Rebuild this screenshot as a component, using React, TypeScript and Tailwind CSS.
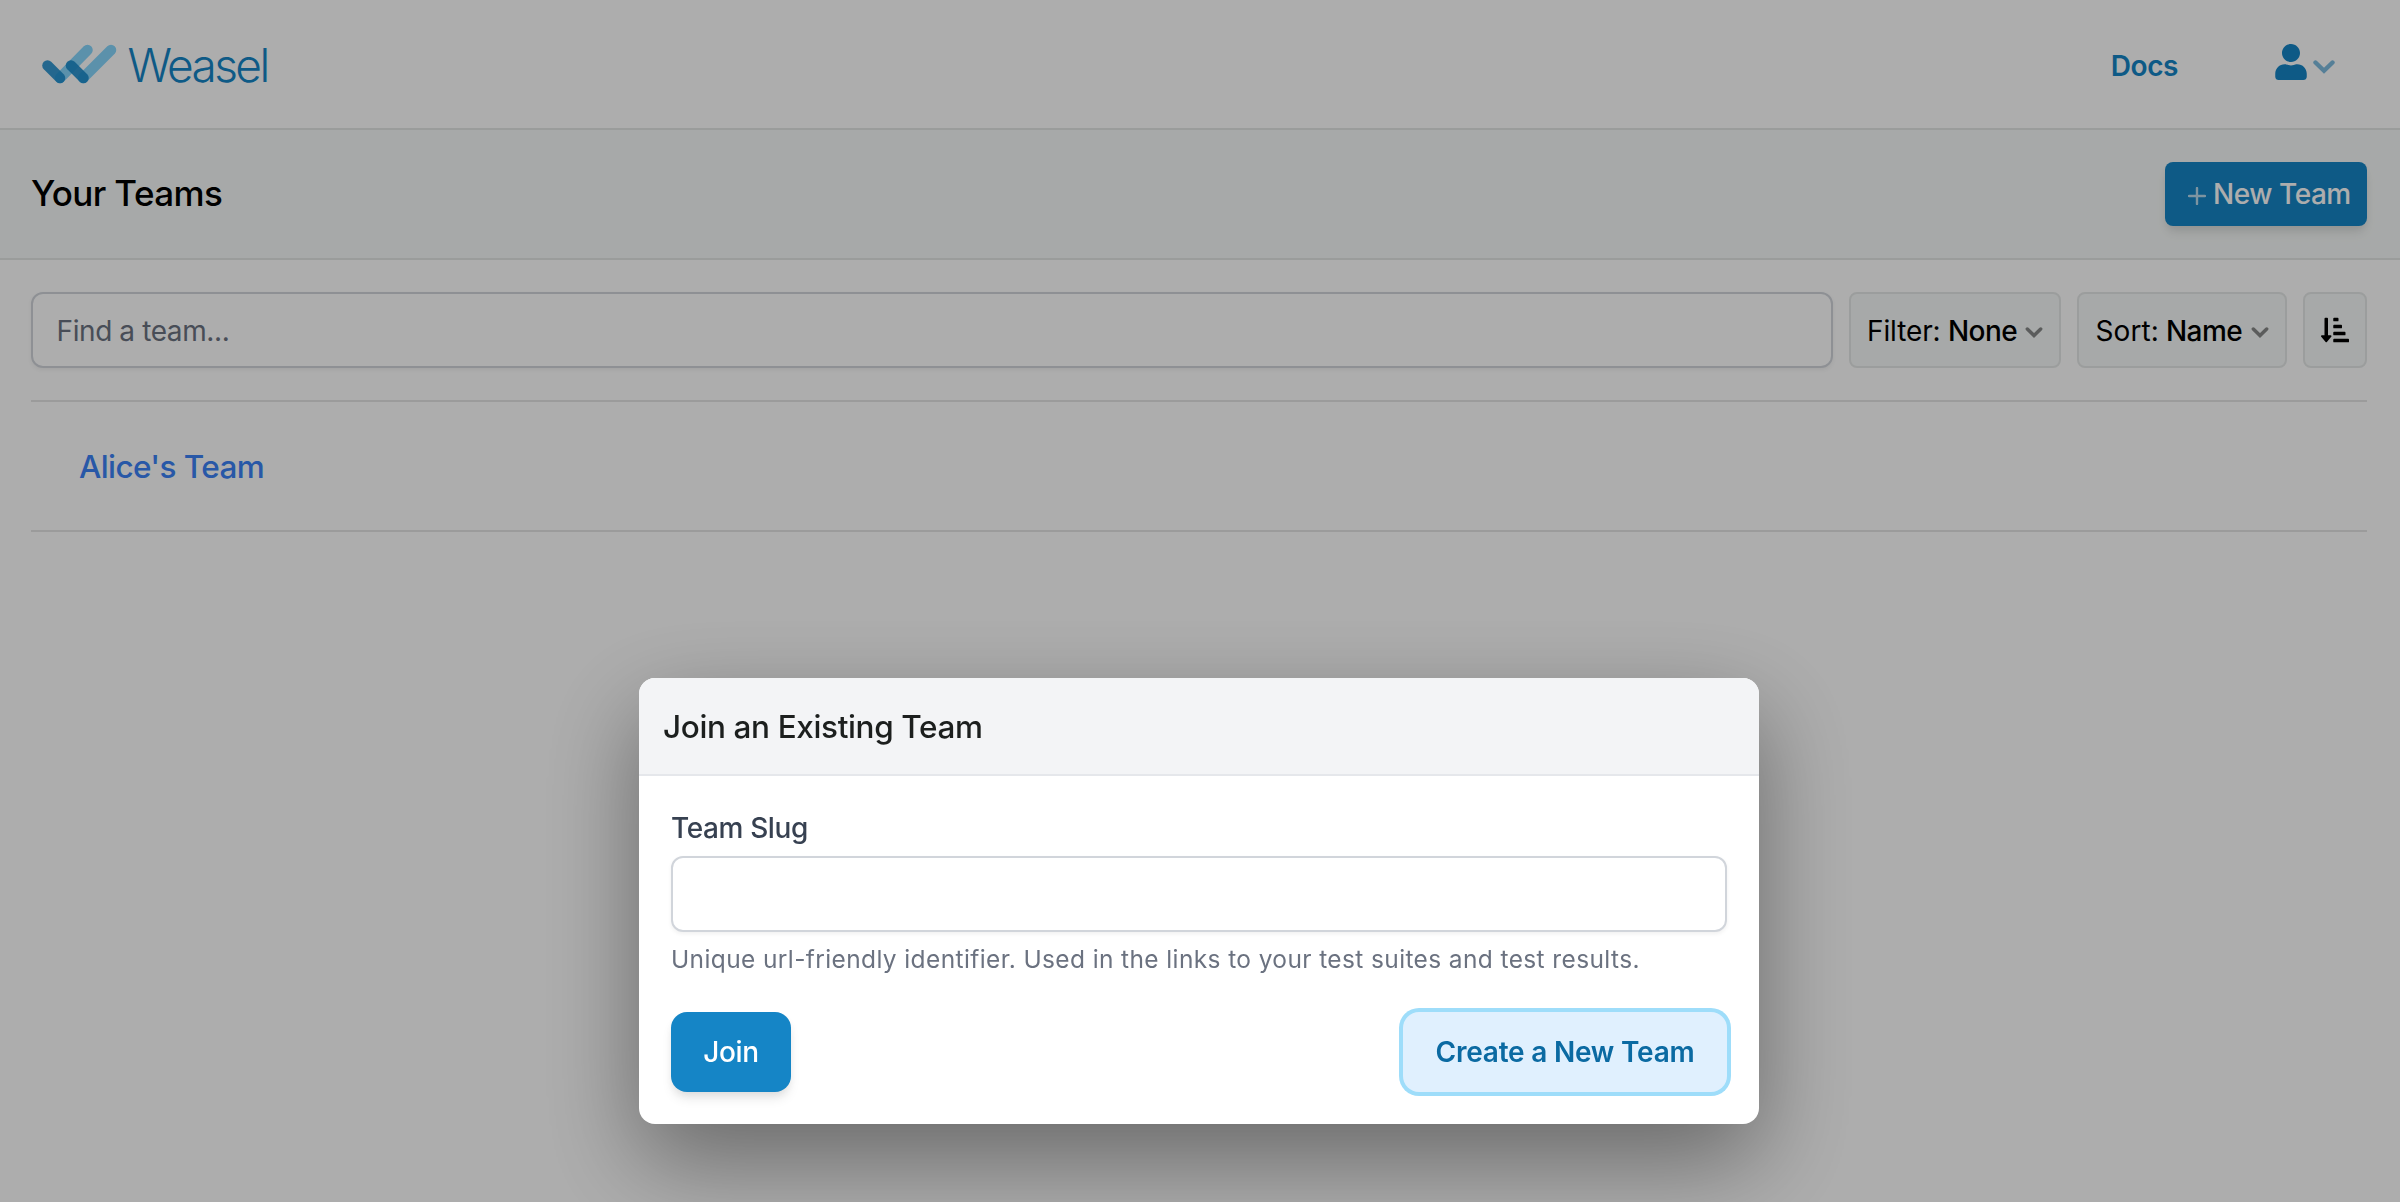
import React from "react";
import { FaUser, FaSortAmountDownAlt } from "react-icons/fa";

function Logo() {
  return (
    <svg className="h-[40px] w-[75px]" viewBox="0 0 75 40" fill="none" strokeLinecap="round" strokeWidth="10.5">
      <path d="M18 34 45.5 6" stroke="#86d6fd" />
      <path d="M5.5 21.500 18 34" stroke="#1a8bcb" strokeOpacity=".88" />
      <path d="M41 34 69 6" stroke="#86d6fd" />
      <path d="M29 21.500 41.500 34" stroke="#1a8bcb" strokeOpacity=".9" />
    </svg>
  );
}

function Chevron({ className }: { className: string }) {
  return (
    <svg className={className} viewBox="0 0 22 14" fill="none" stroke="currentColor" strokeWidth="4.4" strokeLinecap="round" strokeLinejoin="miter">
      <path d="M2.500 2.500 11 10.800 19.500 2.500" />
    </svg>
  );
}

function Plus() {
  return (
    <svg className="mt-[4px] h-[18px] w-[18px] shrink-0 opacity-70" viewBox="0 0 18 18" stroke="currentColor" strokeWidth="2.4" strokeLinecap="round">
      <path d="M9 1v16M1 9h16" />
    </svg>
  );
}

function Header() {
  return (
    <header className="flex h-[130px] items-center justify-between border-b-2 border-[#e3e6e5] pr-[65px] pl-[42px]">
      <a className="flex h-full items-center text-[#1585c6]">
        <Logo />
        <span className="mt-[2px] ml-[10.500px] text-[46px] leading-[60px] font-light tracking-[-2.600px]">Weasel</span>
      </a>
      <nav className="flex items-center text-[#1585c6]">
        <a className="mt-[4px] mr-[97px] text-[28px] leading-[40px] font-semibold tracking-[-0.42px]">Docs</a>
        <button className="mt-[-4px] flex items-center">
          <FaUser size={36} className="ml-[-2px]" />
          <Chevron className="mt-[10px] ml-[4px] h-[14px] w-[22px] opacity-55" />
        </button>
      </nav>
    </header>
  );
}

function Toolbar() {
  return (
    <div className="flex h-[76px] gap-[16px]">
      <input
        className="min-w-0 flex-1 rounded-[12px] border-2 border-[#d1d5db] bg-white px-[23.500px] pt-[1px] text-[28px] tracking-[-0.4px] shadow-[0_2px_4px_rgba(0,0,0,0.06)] outline-none placeholder:text-[#6b7280]"
        placeholder="Find a team..."
      />
      <button className="flex w-[212px] items-center rounded-[8px] border-2 border-[#e5e8e7] bg-[#f7faf9] pt-[1px] pl-[16px] text-[28px]">
        <span className="tracking-[-0.11px]">Filter:</span>
        <span className="ml-[7.500px] font-medium tracking-[-0.62px]">None</span>
        <Chevron className="mt-[4px] ml-[8.500px] h-[11px] w-[18px] opacity-45" />
      </button>
      <button className="flex w-[210px] items-center rounded-[8px] border-2 border-[#e5e8e7] bg-[#f7faf9] pt-[1px] pl-[16.500px] text-[28px]">
        <span className="tracking-[0.1px]">Sort:</span>
        <span className="ml-[7px] font-medium tracking-[-0.54px]">Name</span>
        <Chevron className="mt-[4px] ml-[8.500px] h-[11px] w-[18px] opacity-45" />
      </button>
      <button className="flex w-[64px] items-center justify-center rounded-[8px] border-2 border-[#e5e8e7] bg-[#f7faf9]">
        <FaSortAmountDownAlt size={28} />
      </button>
    </div>
  );
}

function JoinDialog() {
  return (
    <div className="fixed inset-0 flex items-start justify-center bg-black/32 pt-[678px] pr-[2px]">
      <div role="dialog" className="h-[446px] w-[1120px] rounded-[16px] bg-white shadow-[0_36px_96px_rgba(0,0,0,0.40)]">
        <div className="flex h-[98px] items-center rounded-t-[16px] border-b-2 border-[#e5e7eb] bg-[#f3f4f6] px-[24px] pt-[2px]">
          <h2 className="text-[31.500px] leading-[48px] font-medium tracking-[-0.37px] text-[#1c1f1e]">Join an Existing Team</h2>
        </div>
        <form className="flex flex-col px-[32px] pt-[32px]">
          <label className="text-[28px] leading-[40px] font-medium tracking-[-0.38px] text-[#374151]">Team Slug</label>
          <input className="mt-[8px] h-[76px] rounded-[12px] border-2 border-[#d1d5db] bg-white px-[24px] text-[28px] shadow-[0_2px_4px_rgba(0,0,0,0.06)] outline-none" />
          <p className="mt-[9px] text-[24.500px] leading-[36px] tracking-[0.38px] text-[#6b7280]">
            Unique url-friendly identifier. Used in the links to your test suites and test results.
          </p>
          <div className="mt-[35px] flex justify-between">
            <button type="button" className="h-[80px] w-[120px] rounded-[16px] bg-[#1585c6] text-[28px] font-medium tracking-[-0.36px] text-white shadow-[0_8px_12px_-2px_rgba(0,0,0,0.1),0_4px_8px_-2px_rgba(0,0,0,0.06)]">
              Join
            </button>
            <button type="button" className="h-[80px] w-[324px] rounded-[16px] bg-[#e0f0fe] text-[28px] font-semibold tracking-[-0.22px] text-[#0b6aa2] ring-4 ring-[#9eddfa]">
              Create a New Team
            </button>
          </div>
        </form>
      </div>
    </div>
  );
}

export default function App() {
  return (
    <div className="h-[1202px] w-full overflow-hidden bg-white font-['Inter',sans-serif] text-black">
      <Header />
      <div className="flex h-[130px] items-center justify-between border-b-2 border-[#e3e6e5] bg-[#f7faf9] pr-[33px] pl-[31px]">
        <h1 className="mb-[2px] text-[35px] leading-[48px] font-medium tracking-[-0.6px]">Your Teams</h1>
        <button className="flex h-[64px] w-[202px] items-center rounded-[8px] bg-[#1585c6] pl-[23px] text-[28px] font-medium text-white shadow-[0_8px_12px_-2px_rgba(0,0,0,0.1),0_4px_8px_-2px_rgba(0,0,0,0.06)]">
          <Plus />
          <span className="ml-[7px] tracking-[-0.46px] whitespace-nowrap">New Team</span>
        </button>
      </div>
      <main className="pt-[32px] pr-[33px] pl-[31px]">
        <Toolbar />
        <ul className="mt-[32px] border-t-2 border-[#e5e5e5]">
          <li className="flex h-[130px] items-center border-b-2 border-[#e5e5e5] pt-[2px] pl-[48px]">
            <a className="text-[31.500px] leading-[48px] font-medium tracking-[-0.6px] text-[#3b82f6]">Alice's Team</a>
          </li>
        </ul>
      </main>
      <JoinDialog />
    </div>
  );
}
